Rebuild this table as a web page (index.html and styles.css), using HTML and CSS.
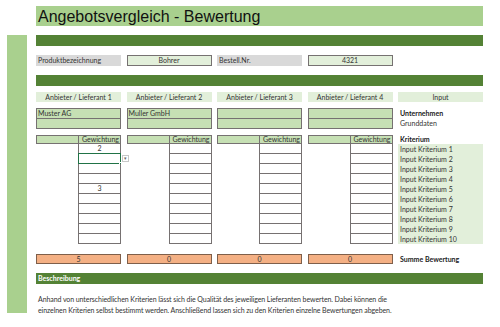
FILE: index.html
```html
<!DOCTYPE html>
<html lang="de">
<head>
<meta charset="utf-8">
<link rel="stylesheet" href="styles.css">
</head>
<body>
<div class="title">Angebotsvergleich - Bewertung</div>
<div class="body">
  <div class="strip"></div>
  <div class="main">
    <div class="bar"></div>
    <div class="grid5 prod">
      <div class="lbl">Produktbezeichnung</div>
      <div class="val">Bohrer</div>
      <div class="lbl">Bestell.Nr.</div>
      <div class="val">4321</div>
      <div></div>
    </div>
    <div class="bar bar2"></div>
    <div class="grid5 heads">
      <div class="head">Anbieter / Lieferant 1</div>
      <div class="head">Anbieter / Lieferant 2</div>
      <div class="head">Anbieter / Lieferant 3</div>
      <div class="head">Anbieter / Lieferant 4</div>
      <div class="head">Input</div>
    </div>
    <div class="grid5 comps">
      <div class="comp"><div class="ccell">Muster AG</div><div class="ccell"></div></div>
      <div class="comp"><div class="ccell">Muller GmbH</div><div class="ccell"></div></div>
      <div class="comp"><div class="ccell"></div><div class="ccell"></div></div>
      <div class="comp"><div class="ccell"></div><div class="ccell"></div></div>
      <div class="side"><div class="b">Unternehmen</div><div>Grunddaten</div></div>
    </div>
    <div class="grid5 weights">
      <div class="wcol">
        <div class="wh"></div><div class="wh wt">Gewichtung</div>
        <div class="wempty"></div>
        <div class="wcells">
          <div class="wc">2</div><div class="wc sel"><span class="handle"></span><span class="dd">&#9662;</span></div><div class="wc"></div><div class="wc"></div><div class="wc">3</div>
          <div class="wc"></div><div class="wc"></div><div class="wc"></div><div class="wc"></div><div class="wc"></div>
        </div>
      </div>
      <div class="wcol">
        <div class="wh"></div><div class="wh wt">Gewichtung</div>
        <div class="wempty"></div>
        <div class="wcells">
          <div class="wc"></div><div class="wc"></div><div class="wc"></div><div class="wc"></div><div class="wc"></div>
          <div class="wc"></div><div class="wc"></div><div class="wc"></div><div class="wc"></div><div class="wc"></div>
        </div>
      </div>
      <div class="wcol">
        <div class="wh"></div><div class="wh wt">Gewichtung</div>
        <div class="wempty"></div>
        <div class="wcells">
          <div class="wc"></div><div class="wc"></div><div class="wc"></div><div class="wc"></div><div class="wc"></div>
          <div class="wc"></div><div class="wc"></div><div class="wc"></div><div class="wc"></div><div class="wc"></div>
        </div>
      </div>
      <div class="wcol">
        <div class="wh"></div><div class="wh wt">Gewichtung</div>
        <div class="wempty"></div>
        <div class="wcells">
          <div class="wc"></div><div class="wc"></div><div class="wc"></div><div class="wc"></div><div class="wc"></div>
          <div class="wc"></div><div class="wc"></div><div class="wc"></div><div class="wc"></div><div class="wc"></div>
        </div>
      </div>
      <div class="crit">
        <div class="b ch">Kriterium</div>
        <div class="inputs">
          <div>Input Kriterium 1</div><div>Input Kriterium 2</div><div>Input Kriterium 3</div><div>Input Kriterium 4</div><div>Input Kriterium 5</div>
          <div>Input Kriterium 6</div><div>Input Kriterium 7</div><div>Input Kriterium 8</div><div>Input Kriterium 9</div><div>Input Kriterium 10</div>
        </div>
      </div>
    </div>
    <div class="grid5 sums">
      <div class="sum">5</div>
      <div class="sum">0</div>
      <div class="sum">0</div>
      <div class="sum">0</div>
      <div class="b stext">Summe Bewertung</div>
    </div>
    <div class="bar desc">Beschreibung</div>
    <p class="text">Anhand von unterschiedlichen Kriterien lässt sich die Qualität des jeweiligen Lieferanten bewerten. Dabei können die<br>einzelnen Kriterien selbst bestimmt werden. Anschließend lassen sich zu den Kriterien einzelne Bewertungen abgeben.</p>
  </div>
</div>
</body>
</html>
```
FILE: styles.css
```css
* { box-sizing: border-box; }
html, body { margin: 0; padding: 0; background: #fff; }
body {
  width: 500px; height: 327px; overflow: hidden;
  font-family: Lato, "Open Sans", sans-serif;
  font-size: 7px; color: #333;
}
.title {
  margin: 6px 0 0 36px; width: 447px; height: 20px;
  background: #a9d08e;
  font-family: "Liberation Sans", Arial, sans-serif;
  font-size: 16px; line-height: 21px; color: #111;
  padding-left: 2px;
}
.body { display: flex; margin-top: 9px; }
.strip { width: 20px; height: 278px; margin-left: 7px; background: #a9d08e; }
.main { width: 447px; margin-left: 9px; display: flex; flex-direction: column; }
.bar { height: 11px; background: #548235; }
.bar2 { margin-top: 9px; }
.grid5 { display: grid; grid-template-columns: 85px 85px 85px 85px 85px; column-gap: 5.5px; }
.prod { margin-top: 9px; height: 11px; }
.lbl { background: #d9d9d9; padding-left: 2px; line-height: 11px; }
.val { background: #e2efda; border: 1px solid #767171; text-align: center; line-height: 9px; }
.heads { margin-top: 6px; height: 10px; }
.head { background: #e2efda; text-align: center; line-height: 10px; }
.comps { margin-top: 6px; height: 20px; }
.comp { display: flex; flex-direction: column; border: 1px solid #767171; border-bottom: 0; }
.ccell { height: 10px; background: #c6e0b4; border-bottom: 1px solid #767171; padding-left: 1px; line-height: 9px; }
.side { padding-left: 2px; line-height: 10px; }
.b { font-weight: 700; color: #222; }
.weights { margin-top: 7px; }
.wcol { display: grid; grid-template-columns: 42px 43px; grid-template-rows: 9px 100px; }
.wh { background: #c6e0b4; border: 1px solid #767171; border-right: 0; height: 9px; }
.wt { border-right: 1px solid #767171; text-align: right; padding-right: 1px; line-height: 7px; }
.wcells { display: flex; flex-direction: column; }
.wc { height: 10px; border: 1px solid #767171; border-top: 0; text-align: center; line-height: 9px; position: relative; }
.sel { border: 1px solid #217346; margin-top: -1px; height: 11px; }
.handle { position: absolute; right: -2px; bottom: -2px; width: 3px; height: 3px; background: #217346; border: 1px solid #fff; }
.dd { position: absolute; left: 43px; top: 1px; width: 7px; height: 7px; border: 1px solid #c8c8c8; background: #fff; font-size: 5px; line-height: 5px; text-align: center; color: #666; }
.crit { display: grid; grid-template-rows: 9px 100px; }
.ch { padding-left: 2px; line-height: 9px; }
.inputs { background: #e2efda; display: flex; flex-direction: column; }
.inputs div { height: 10px; line-height: 10px; padding-left: 2px; color: #333; }
.sums { margin-top: 10px; height: 10px; }
.sum { background: #f4b084; border: 1px solid #7f5f4a; text-align: center; line-height: 8px; }
.stext { padding-left: 2px; line-height: 10px; }
.desc { margin-top: 9px; color: #fff; font-weight: 700; line-height: 11px; padding-left: 2px; font-size: 7px; }
.text { margin: 10px 0 0 2px; line-height: 11px; white-space: nowrap; letter-spacing: -0.08px; }
```
